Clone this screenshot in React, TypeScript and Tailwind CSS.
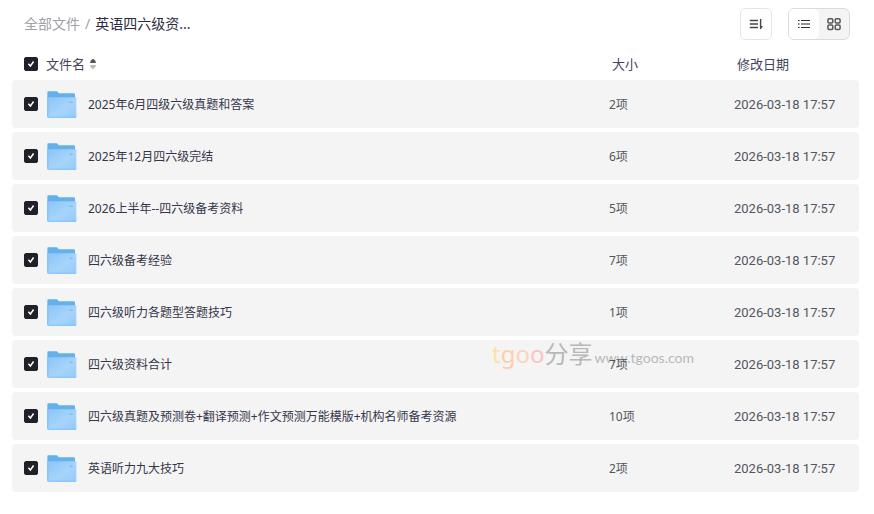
import { useState } from 'react';

interface FileItem {
  name: string;
  size: string;
  date: string;
}

const files: FileItem[] = [
  { name: '2025年6月四级六级真题和答案', size: '2项', date: '2026-03-18 17:57' },
  { name: '2025年12月四六级完结', size: '6项', date: '2026-03-18 17:57' },
  { name: '2026上半年--四六级备考资料', size: '5项', date: '2026-03-18 17:57' },
  { name: '四六级备考经验', size: '7项', date: '2026-03-18 17:57' },
  { name: '四六级听力各题型答题技巧', size: '1项', date: '2026-03-18 17:57' },
  { name: '四六级资料合计', size: '7项', date: '2026-03-18 17:57' },
  {
    name: '四六级真题及预测卷+翻译预测+作文预测万能模版+机构名师备考资源',
    size: '10项',
    date: '2026-03-18 17:57',
  },
  { name: '英语听力九大技巧', size: '2项', date: '2026-03-18 17:57' },
];

interface CheckboxProps {
  label: string;
  checked: boolean;
  onChange: () => void;
}

function Checkbox({ label, checked, onChange }: CheckboxProps) {
  return (
    <span className="grid h-3.5 w-3.5 shrink-0 place-items-center">
      <input
        type="checkbox"
        aria-label={label}
        checked={checked}
        onChange={onChange}
        className="col-start-1 row-start-1 h-3.5 w-3.5 appearance-none rounded-[2px] border border-[#1f2028] bg-white checked:bg-[#1f2028]"
      />
      {checked && (
        <svg
          viewBox="0 0 14 14"
          className="pointer-events-none col-start-1 row-start-1 h-3.5 w-3.5"
          fill="none"
          stroke="#fff"
          strokeWidth="1.5"
        >
          <path d="M4.4 6.8 6.4 9 9.6 4.5" />
        </svg>
      )}
    </span>
  );
}

function FolderIcon() {
  return (
    <svg viewBox="0 0 32 32" className="h-8 w-8 shrink-0" aria-hidden="true">
      <defs>
        <linearGradient id="folder-front" x1="0" y1="0" x2="1" y2="1">
          <stop offset="0" stopColor="#8ac4f7" />
          <stop offset="0.55" stopColor="#a6d4fb" />
          <stop offset="1" stopColor="#94cbfa" />
        </linearGradient>
      </defs>
      <path
        d="M1.4 4Q1.4 3.2 2.2 3.2H10.6Q11.2 3.2 11.6 3.7L12.8 5.2H28Q29 5.2 29 6.2V29H2.4Q1.4 29 1.4 28Z"
        fill="#62b0ee"
      />
      <path
        d="M2.2 9.2H29.5Q30.3 9.2 30.3 10V29Q30.3 29.8 29.5 29.8H2.2Q1.4 29.8 1.4 29V10Q1.4 9.2 2.2 9.2Z"
        fill="url(#folder-front)"
      />
      <path d="M1.9 9V29.3H30" fill="none" stroke="#7dc0f6" strokeWidth="0.9" />
      <path d="M23.3 13.3H26.8V15H23.3Z" fill="#83bff0" />
    </svg>
  );
}

function Toolbar() {
  return (
    <div className="flex h-8 items-center justify-between pr-[9px] pl-3">
      <nav className="flex items-center gap-[5px] text-sm text-[#a0a0a8]">
        <a href="#all">全部文件</a>
        <span>/</span>
        <span className="text-[#2c2c3e]">英语四六级资...</span>
      </nav>
      <div className="flex gap-4">
        <button
          type="button"
          aria-label="排序"
          className="grid h-8 w-8 place-items-center rounded-md border border-[#e4e4e7] bg-white"
        >
          <svg viewBox="0 0 16 16" className="h-4 w-4" fill="none" stroke="#45454a">
            <path d="M1.8 4.5H10M1.8 8H10M1.8 11.5H10" strokeWidth="1.3" />
            <path d="M12.6 3V13" strokeWidth="1.4" />
            <path d="M12 13.4V10L15 10Z" fill="#45454a" stroke="none" />
          </svg>
        </button>
        <div className="flex h-8 overflow-hidden rounded-md border border-[#dcdcdf] bg-[#f4f4f5]">
          <button
            type="button"
            aria-label="列表"
            className="grid w-[30px] place-items-center rounded-r-md bg-white"
          >
            <svg viewBox="0 0 16 16" className="h-4 w-4" fill="none" stroke="#2c2c31" strokeWidth="1.1">
              <path d="M5 4.5H14M5 8H14M5 11.5H14" />
              <path d="M2 4.5H3.6M2 8H3.6M2 11.5H3.6" />
            </svg>
          </button>
          <button type="button" aria-label="网格" className="grid w-[30px] place-items-center">
            <svg viewBox="0 0 16 16" className="h-4 w-4" fill="none" stroke="#57575c" strokeWidth="1.5">
              <rect x="1.9" y="2.7" width="4.9" height="4.3" rx="1.2" />
              <rect x="9.2" y="2.7" width="4.9" height="4.3" rx="1.2" />
              <rect x="1.9" y="9.1" width="4.9" height="4.3" rx="1.2" />
              <rect x="9.2" y="9.1" width="4.9" height="4.3" rx="1.2" />
            </svg>
          </button>
        </div>
      </div>
    </div>
  );
}

function Watermark() {
  return (
    <div className="pointer-events-none absolute top-0 right-10 flex items-baseline gap-0.5 whitespace-nowrap text-[#b8b8ba]">
      <span className="text-2xl leading-7">
        <span className="text-[#fbe3a6]">t</span>
        <span className="text-[#fbcfae]">g</span>
        <span className="text-[#fbd3bd]">o</span>
        <span className="text-[#f9c3c3]">o</span>
        分享
      </span>
      <span className="font-[Lato,sans-serif] text-sm">www.tgoos.com</span>
    </div>
  );
}

export default function App() {
  const [selected, setSelected] = useState<string[]>(files.map((f) => f.name));
  const allSelected = selected.length === files.length;

  const toggle = (name: string) =>
    setSelected((prev) =>
      prev.includes(name) ? prev.filter((n) => n !== name) : [...prev, name],
    );

  return (
    <main className="bg-white pt-2 pr-[15px] pb-4 pl-3 font-['Noto_Sans','Noto_Sans_CJK_SC',sans-serif]">
      <Toolbar />
      <table className="mt-2 w-full table-fixed border-separate border-spacing-x-0 border-spacing-y-1 text-xs">
        <thead>
          <tr className="h-6 text-left text-[13px] leading-5 text-[#44445a]">
            <th className="p-0 pl-3 font-normal">
              <div className="flex items-center gap-2">
                <Checkbox
                  label="全选"
                  checked={allSelected}
                  onChange={() => setSelected(allSelected ? [] : files.map((f) => f.name))}
                />
                <button type="button" className="flex items-center gap-1">
                  文件名
                  <svg viewBox="0 0 8 12" className="h-3 w-2">
                    <path d="M4 0.8Q7 2.2 7 5H1Q1 2.2 4 0.8Z" fill="#55555c" />
                    <path d="M4 11.2Q7 9.8 7 7H1Q1 9.8 4 11.2Z" fill="#b9b9bd" />
                  </svg>
                </button>
              </div>
            </th>
            <th className="w-[125px] p-0 pl-[3px] font-normal">大小</th>
            <th className="w-[125px] p-0 pl-[3px] font-normal">修改日期</th>
          </tr>
        </thead>
        <tbody>
          {files.map((file, i) => (
            <tr key={file.name} className="h-12 text-[#55555f]">
              <td className="rounded-l bg-[#f4f4f4] p-0 pl-3">
                <div className="flex items-center gap-2">
                  <Checkbox
                    label={file.name}
                    checked={selected.includes(file.name)}
                    onChange={() => toggle(file.name)}
                  />
                  <FolderIcon />
                  <span className="ml-0.5 truncate pt-0.5 text-[#35354a]">{file.name}</span>
                </div>
              </td>
              <td className="relative bg-[#f4f4f4] p-0 pt-0.5">
                {i === 5 && <Watermark />}
                <span className="relative">{file.size}</span>
              </td>
              <td className="rounded-r bg-[#f4f4f4] p-0 pt-0.5 font-[Roboto,sans-serif] text-[13px]">
                {file.date}
              </td>
            </tr>
          ))}
        </tbody>
      </table>
    </main>
  );
}
